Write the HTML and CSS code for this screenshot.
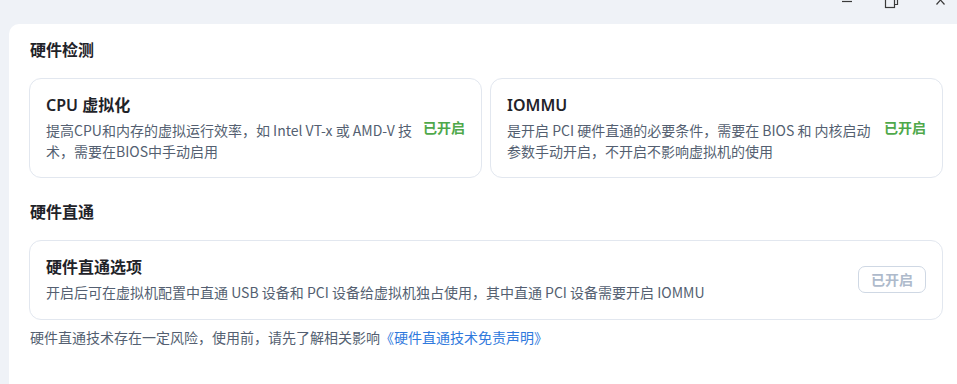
FILE: index.html
```html
<!DOCTYPE html>
<html lang="zh-CN">
<head>
<meta charset="utf-8">
<link rel="stylesheet" href="styles.css">
</head>
<body>
<div class="titlebar">
  <div class="winctl">
    <svg class="ic ic-min" width="12" height="10" viewBox="0 0 12 10"><path d="M1 1.5H11" stroke="#3a3a3a" stroke-width="1.2"/></svg>
    <svg class="ic ic-max" width="16" height="10" viewBox="0 0 16 10"><rect x="1.5" y="-3" width="9" height="10.5" fill="none" stroke="#3a3a3a" stroke-width="1.2"/><path d="M4 -4.5H13.5V4.5H10.5" fill="none" stroke="#3a3a3a" stroke-width="1.2"/></svg>
    <svg class="ic ic-close" width="12" height="10" viewBox="0 0 12 10"><path d="M1.5 -4.5L9.5 4.5M9.5 -4.5L1.5 4.5" stroke="#3a3a3a" stroke-width="1.2"/></svg>
  </div>
</div>
<main class="panel">
  <h2 class="sec-title">硬件检测</h2>
  <div class="grid">
    <div class="card">
      <div class="card-body">
        <div class="card-title">CPU 虚拟化</div>
        <div class="card-desc">提高CPU和内存的虚拟运行效率，如 Intel VT-x 或 AMD-V 技术，需要在BIOS中手动启用</div>
      </div>
      <div class="status">已开启</div>
    </div>
    <div class="card">
      <div class="card-body">
        <div class="card-title">IOMMU</div>
        <div class="card-desc">是开启 PCI 硬件直通的必要条件，需要在 BIOS 和 内核启动参数手动开启，不开启不影响虚拟机的使用</div>
      </div>
      <div class="status">已开启</div>
    </div>
  </div>
  <h2 class="sec-title sec-2">硬件直通</h2>
  <div class="card card-wide">
    <div class="card-body">
      <div class="card-title">硬件直通选项</div>
      <div class="card-desc">开启后可在虚拟机配置中直通 USB 设备和 PCI 设备给虚拟机独占使用，其中直通 PCI 设备需要开启 IOMMU</div>
    </div>
    <button class="btn-disabled">已开启</button>
  </div>
  <p class="note">硬件直通技术存在一定风险，使用前，请先了解相关影响<a class="link" href="#">《硬件直通技术免责声明》</a></p>
</main>
</body>
</html>
```

FILE: styles.css
```css
* { box-sizing: border-box; }
html, body { margin: 0; padding: 0; }
body {
  background: #eff2f7;
  font-family: "Noto Sans", "Noto Sans CJK SC", sans-serif;
  color: #1f2329;
  width: 957px;
  height: 384px;
  overflow: hidden;
}
.titlebar {
  height: 24px;
  display: flex;
  justify-content: flex-end;
  align-items: flex-start;
}
.winctl {
  display: flex;
  align-items: flex-start;
  padding-right: 10px;
}
.ic { display: block; }
.ic-min { margin-right: 31px; }
.ic-max { margin-right: 35px; }
.ic-close { margin-top: 0; }
.panel {
  margin-left: 9px;
  background: #ffffff;
  border-radius: 10px 0 0 0;
  padding: 14px 14px 0 20px;
  height: 360px;
}
.sec-title {
  margin: 0 0 16px 1px;
  font-size: 16px;
  line-height: 24px;
  font-weight: 700;
  color: #1f2329;
}
.sec-2 { margin-top: 22px; }
.grid {
  display: grid;
  grid-template-columns: 1fr 1fr;
  gap: 8px;
}
.card {
  border: 1px solid #e2e7ef;
  border-radius: 12px;
  padding: 14px 16px 15px 16px;
  display: flex;
  align-items: center;
  gap: 7px;
}
.card-body { flex: 1; min-width: 0; }
.card-title {
  font-size: 16px;
  line-height: 24px;
  font-weight: 600;
  color: #1f2329;
  margin-bottom: 3px;
}
.card-desc {
  font-family: "Noto Sans CJK SC", "Noto Sans", sans-serif;
  font-size: 14px;
  line-height: 21px;
  color: #545f71;
}
.status {
  font-family: "Noto Sans CJK SC", sans-serif;
  font-size: 14px;
  line-height: 21px;
  font-weight: 700;
  color: #4fa84a;
  white-space: nowrap;
  flex: none;
}
.card-wide {
  padding: 14px 16px 16px 16px;
}
.btn-disabled {
  flex: none;
  font-family: "Noto Sans CJK SC", sans-serif;
  font-size: 14px;
  font-weight: 700;
  line-height: 19px;
  color: #aebacb;
  background: #ffffff;
  border: 1px solid #cfd8e4;
  border-radius: 7px;
  padding: 3px 12px;
  width: 68px;
  height: 27px;
}
.note {
  margin: 7px 0 0 1px;
  font-family: "Noto Sans CJK SC", sans-serif;
  font-size: 14px;
  line-height: 21px;
  color: #545f71;
}
.link {
  color: #2f79dd;
  text-decoration: none;
}
```
